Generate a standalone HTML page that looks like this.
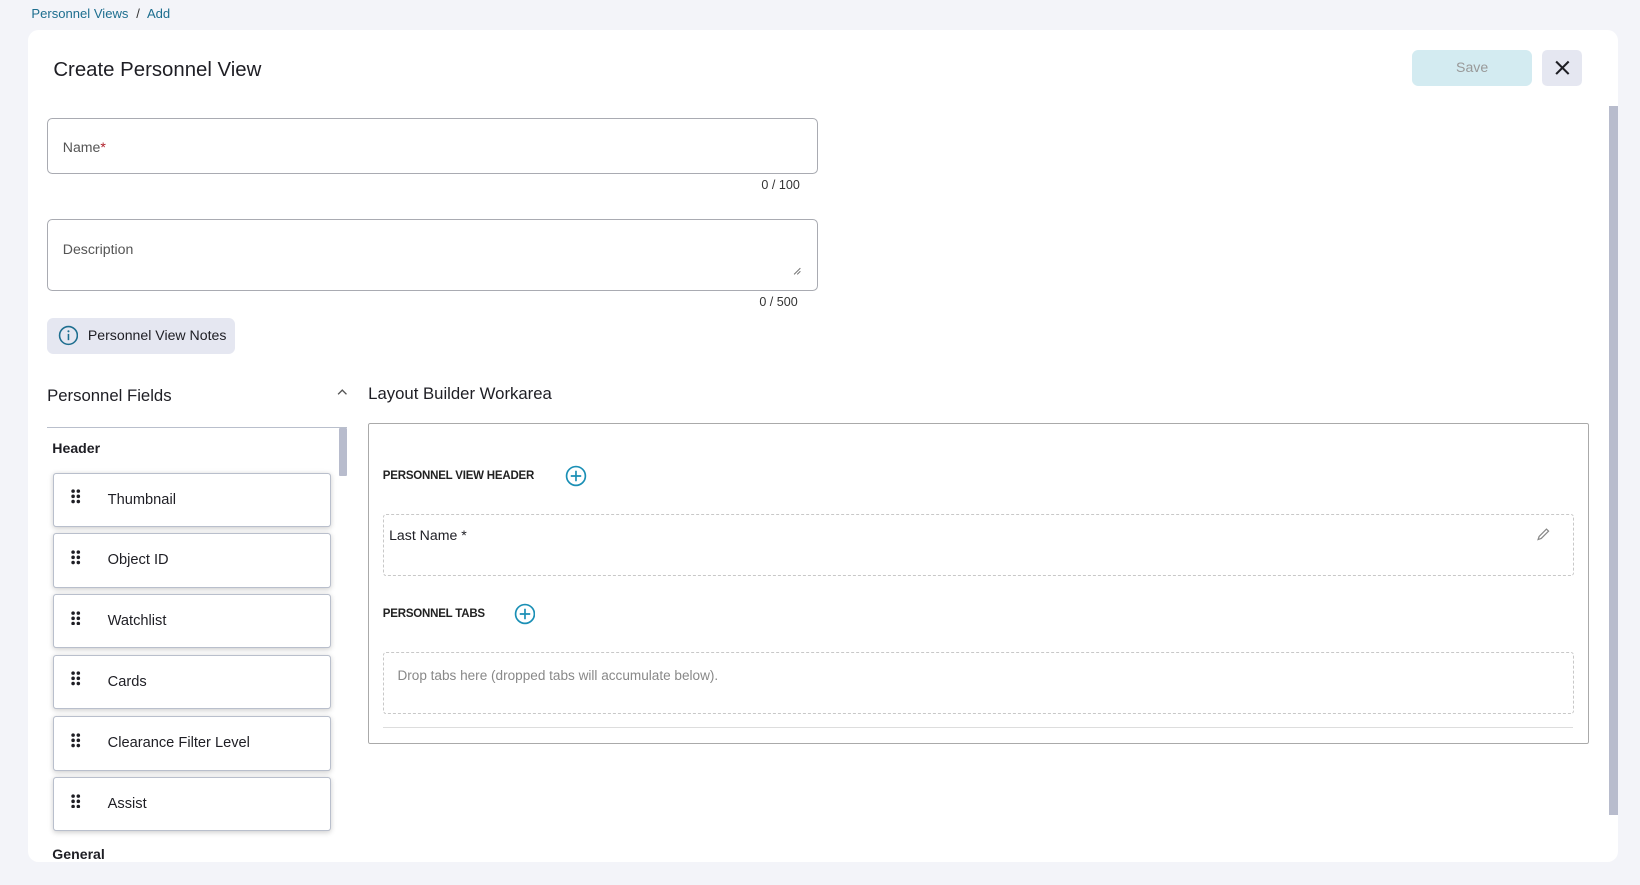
<!DOCTYPE html>
<html><head><meta charset="utf-8"><style>
html,body{margin:0;padding:0;background:#f3f4f9;overflow:hidden}
#w{zoom:1.04592;width:1568px;height:846px;position:relative;font-family:"Liberation Sans",sans-serif;color:#1e1e24}
.a{position:absolute}
.crumb{font-size:12.5px;color:#1d6e8f}
.card{left:27px;top:29px;width:1520px;height:795px;background:#fff;border-radius:10px}
.inp{border:1px solid #a9abb2;border-radius:5px;background:#fff}
.lbl{font-size:13.5px;color:#555}
.cnt{font-size:12px;color:#333}
.item{left:51px;width:264px;height:50px;border:1.5px solid #b9bfcc;border-radius:3px;background:#fff;box-shadow:0 1px 5px rgba(0,0,0,.2)}
.item span{position:absolute;left:51px;top:17px;font-size:14px;color:#1e1e24}
.dots{position:absolute;left:16px;top:15px;width:10px;height:14px}
.sec{font-size:11px;font-weight:bold;color:#222;letter-spacing:-0.2px}
.dash{border:1px dashed #c8c8c8;border-radius:3px}
</style></head><body><div id="w">
<div class="a crumb" style="left:30px;top:6px">Personnel Views <span style="color:#333;margin:0 4px">/</span> Add</div>
<div class="a card"></div>
<div class="a" style="left:51px;top:56px;font-size:19.5px;color:#1e1e24">Create Personnel View</div>
<div class="a" style="left:1350px;top:48px;width:115px;height:34px;background:#d3ebf1;border-radius:6px;color:#999;font-size:13.5px;text-align:center;line-height:34px">Save</div>
<div class="a" style="left:1474px;top:48px;width:39px;height:34px;background:#e5e7f1;border-radius:5px"><svg width="39" height="34"><path d="M13.5 11 L25.5 23 M25.5 11 L13.5 23" stroke="#1e1e24" stroke-width="2"/></svg></div>
<div class="a" style="left:1538px;top:101px;width:9px;height:678px;background:#b8bccd"></div>

<div class="a inp" style="left:45px;top:113px;width:735px;height:51px"></div>
<div class="a lbl" style="left:60px;top:133px">Name<span style="color:#b0202a">*</span></div>
<div class="a cnt" style="left:728px;top:170px">0 / 100</div>
<div class="a inp" style="left:45px;top:209px;width:735px;height:67px"></div>
<div class="a lbl" style="left:60px;top:230px">Description</div>
<svg class="a" style="left:757px;top:254px" width="10" height="10"><path d="M2 8 L8 2 M5 8 L8 5" stroke="#777" stroke-width="1"/></svg>
<div class="a cnt" style="left:726px;top:282px">0 / 500</div>
<div class="a" style="left:45px;top:304px;width:180px;height:34px;background:#e5e7f1;border-radius:6px"></div>
<svg class="a" style="left:55px;top:311px" width="20" height="20"><circle cx="10" cy="10" r="8.5" fill="none" stroke="#1d6e8f" stroke-width="1.5"/><circle cx="10" cy="6" r="1" fill="#1d6e8f"/><path d="M10 8.5 V14.5" stroke="#1d6e8f" stroke-width="1.5"/></svg>
<div class="a" style="left:84px;top:313px;font-size:13.5px">Personnel View Notes</div>

<div class="a" style="left:45px;top:369px;font-size:16px">Personnel Fields</div>
<svg class="a" style="left:321px;top:370px" width="12" height="10"><path d="M2 7 L6 3 L10 7" fill="none" stroke="#555" stroke-width="1.3"/></svg>
<div class="a" style="left:45px;top:408px;width:287px;height:1px;background:#b9bfcc"></div>
<div class="a" style="left:324px;top:409px;width:8px;height:46px;background:#b8bccd;border-radius:1px"></div>
<div class="a" style="left:50px;top:421px;font-size:13.5px;font-weight:bold">Header</div>
<div class="a item" style="top:452px"><svg class="dots"><g fill="#1e1e24"><circle cx="2" cy="2" r="1.7"/><circle cx="7" cy="2" r="1.7"/><circle cx="2" cy="7" r="1.7"/><circle cx="7" cy="7" r="1.7"/><circle cx="2" cy="12" r="1.7"/><circle cx="7" cy="12" r="1.7"/></g></svg><span>Thumbnail</span></div>
<div class="a item" style="top:510px"><svg class="dots"><g fill="#1e1e24"><circle cx="2" cy="2" r="1.7"/><circle cx="7" cy="2" r="1.7"/><circle cx="2" cy="7" r="1.7"/><circle cx="7" cy="7" r="1.7"/><circle cx="2" cy="12" r="1.7"/><circle cx="7" cy="12" r="1.7"/></g></svg><span>Object ID</span></div>
<div class="a item" style="top:568px"><svg class="dots"><g fill="#1e1e24"><circle cx="2" cy="2" r="1.7"/><circle cx="7" cy="2" r="1.7"/><circle cx="2" cy="7" r="1.7"/><circle cx="7" cy="7" r="1.7"/><circle cx="2" cy="12" r="1.7"/><circle cx="7" cy="12" r="1.7"/></g></svg><span>Watchlist</span></div>
<div class="a item" style="top:626px"><svg class="dots"><g fill="#1e1e24"><circle cx="2" cy="2" r="1.7"/><circle cx="7" cy="2" r="1.7"/><circle cx="2" cy="7" r="1.7"/><circle cx="7" cy="7" r="1.7"/><circle cx="2" cy="12" r="1.7"/><circle cx="7" cy="12" r="1.7"/></g></svg><span>Cards</span></div>
<div class="a item" style="top:685px"><svg class="dots"><g fill="#1e1e24"><circle cx="2" cy="2" r="1.7"/><circle cx="7" cy="2" r="1.7"/><circle cx="2" cy="7" r="1.7"/><circle cx="7" cy="7" r="1.7"/><circle cx="2" cy="12" r="1.7"/><circle cx="7" cy="12" r="1.7"/></g></svg><span>Clearance Filter Level</span></div>
<div class="a item" style="top:743px"><svg class="dots"><g fill="#1e1e24"><circle cx="2" cy="2" r="1.7"/><circle cx="7" cy="2" r="1.7"/><circle cx="2" cy="7" r="1.7"/><circle cx="7" cy="7" r="1.7"/><circle cx="2" cy="12" r="1.7"/><circle cx="7" cy="12" r="1.7"/></g></svg><span>Assist</span></div>
<div class="a" style="left:50px;top:809px;font-size:13.5px;font-weight:bold">General</div>

<div class="a" style="left:352px;top:367px;font-size:16px">Layout Builder Workarea</div>
<div class="a" style="left:352px;top:404px;width:1165px;height:305px;border:1px solid #aaa;border-radius:2px"></div>
<div class="a sec" style="left:366px;top:449px">PERSONNEL VIEW HEADER</div>
<svg class="a" style="left:540px;top:445px" width="21" height="21"><circle cx="10.5" cy="10.5" r="9" fill="none" stroke="#1a8fb5" stroke-width="1.6"/><path d="M10.5 5.5 V15.5 M5.5 10.5 H15.5" stroke="#1a8fb5" stroke-width="1.6"/></svg>
<div class="a dash" style="left:366px;top:491px;width:1137px;height:58px"></div>
<div class="a" style="left:372px;top:504px;font-size:13.5px">Last Name *</div>
<svg class="a" style="left:1469px;top:504px" width="14" height="14"><path d="M2 12 L3 9 L10 2 L12 4 L5 11 Z" fill="none" stroke="#888" stroke-width="1.2"/></svg>
<div class="a sec" style="left:366px;top:581px">PERSONNEL TABS</div>
<svg class="a" style="left:491px;top:577px" width="21" height="21"><circle cx="10.5" cy="10.5" r="9" fill="none" stroke="#1a8fb5" stroke-width="1.6"/><path d="M10.5 5.5 V15.5 M5.5 10.5 H15.5" stroke="#1a8fb5" stroke-width="1.6"/></svg>
<div class="a dash" style="left:366px;top:623px;width:1137px;height:58px"></div>
<div class="a" style="left:380px;top:639px;font-size:13px;color:#888">Drop tabs here (dropped tabs will accumulate below).</div>
<div class="a" style="left:366px;top:695px;width:1138px;height:1px;background:#ddd"></div>
</div></body></html>
